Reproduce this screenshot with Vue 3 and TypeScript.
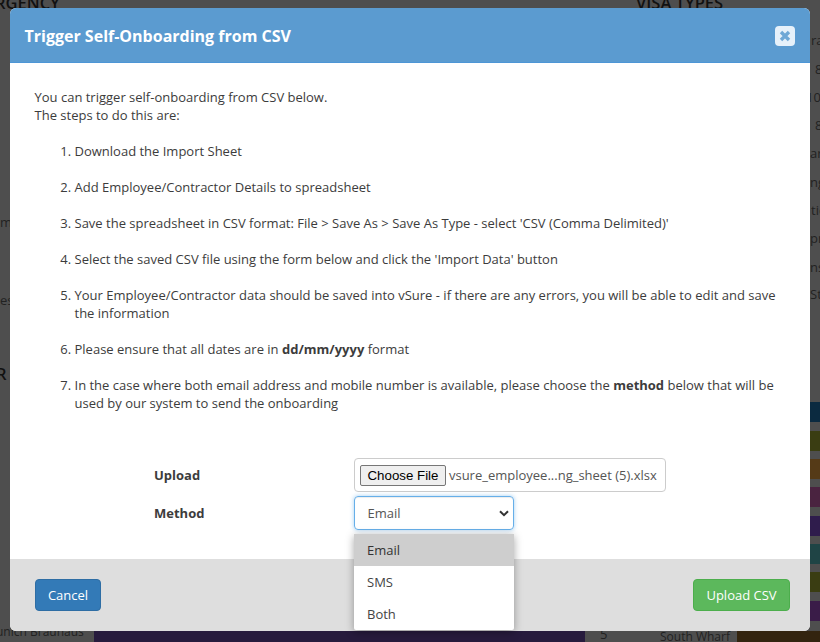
<script setup lang="ts">
const steps = [
  'Download the Import Sheet',
  'Add Employee/Contractor Details to spreadsheet',
  "Save the spreadsheet in CSV format: File > Save As > Save As Type - select 'CSV (Comma Delimited)'",
  "Select the saved CSV file using the form below and click the 'Import Data' button",
  'Your Employee/Contractor data should be saved into vSure - if there are any errors, you will be able to edit and save the information',
]
const bars = [
  { top: 402, color: '#0b2a40' },
  { top: 431, color: '#3a3d12' },
  { top: 459, color: '#553a17' },
  { top: 487, color: '#4a2340' },
  { top: 516, color: '#2f1c4c' },
  { top: 544, color: '#1f4445' },
  { top: 572, color: '#3a3d12' },
  { top: 601, color: '#3a1c48' },
]
</script>

<template>
  <div class="page">
    <div class="bg">
      <span class="frag head" style="left:-5px;top:-8px">RGENCY</span>
      <span class="frag head" style="left:636px;top:-8px">VISA TYPES</span>
      <span class="frag head" style="left:-4px;top:363px">R</span>
      <span class="frag" style="left:0;top:213px">mp</span>
      <span class="frag" style="left:0;top:291px">es</span>
      <span class="frag small" style="left:-4px;top:623px">unich Brauhaus</span>
      <span class="frag" style="left:811px;top:31px">ral</span>
      <span class="frag" style="left:815px;top:60px">8</span>
      <span class="frag" style="left:806px;top:88px">10</span>
      <span class="frag" style="left:815px;top:116px">8</span>
      <span class="frag" style="left:810px;top:144px">ary</span>
      <span class="frag" style="left:810px;top:173px">ng</span>
      <span class="frag" style="left:811px;top:201px">tic</span>
      <span class="frag" style="left:810px;top:229px">pre</span>
      <span class="frag" style="left:810px;top:258px">ns</span>
      <span class="frag" style="left:810px;top:285px">St</span>
      <span class="frag" style="left:600px;top:625px">5</span>
      <span class="frag small" style="left:660px;top:628px">South Wharf</span>
      <div v-for="b in bars" :key="b.top" class="bar" :style="{ top: b.top + 'px', background: b.color }"></div>
      <div class="bar wide-purple"></div>
      <div class="bar wide-brown"></div>
    </div>

    <div class="modal">
      <header class="modal-header">
        <h4>Trigger Self-Onboarding from CSV</h4>
        <button class="close" aria-label="Close">
          <svg width="12" height="12" viewBox="0 0 12 12"><path d="M2 2 L10 10 M10 2 L2 10" stroke="#6fa8d6" stroke-width="3.4" fill="none" /></svg>
        </button>
      </header>
      <section class="modal-body">
        <p class="intro">You can trigger self-onboarding from CSV below.<br />The steps to do this are:</p>
        <ol class="steps">
          <li v-for="s in steps" :key="s">{{ s }}</li>
          <li>Please ensure that all dates are in <b>dd/mm/yyyy</b> format</li>
          <li>In the case where both email address and mobile number is available, please choose the <b>method</b> below that will be used by our system to send the onboarding</li>
        </ol>
        <div class="form">
          <label>Upload</label>
          <div class="file">
            <span class="file-btn">Choose File</span>
            <span class="file-name">vsure_employee...ng_sheet (5).xlsx</span>
          </div>
          <label>Method</label>
          <div class="select">
            <span>Email</span>
            <svg width="10" height="7" viewBox="0 0 10 7"><path d="M1 1.2 L5 5.2 L9 1.2" stroke="#333" stroke-width="2" fill="none" /></svg>
          </div>
        </div>
      </section>
      <footer class="modal-footer">
        <button class="btn cancel">Cancel</button>
        <button class="btn upload">Upload CSV</button>
      </footer>
      <ul class="menu">
        <li class="on">Email</li>
        <li>SMS</li>
        <li>Both</li>
      </ul>
    </div>
  </div>
</template>

<style>
html, body { margin: 0; background: #4d4d4d; overflow: hidden; }
</style>

<style scoped>
.page {
  position: relative;
  width: 820px;
  height: 642px;
  overflow: hidden;
  background: #4e4e4e;
  font-family: "Open Sans", sans-serif;
  font-size: 13px;
  color: #3c3c3c;
}
.bg { position: absolute; inset: 0; }
.frag { position: absolute; color: #222; white-space: nowrap; font-size: 13px; line-height: 18px; }
.small { font-size: 12px; }
.head { font-size: 16.5px; font-weight: 600; color: #111; line-height: 22px; }
.bar { position: absolute; left: 810px; width: 10px; height: 20px; }
.wide-purple { left: 94px; width: 491px; top: 631px; height: 11px; background: #271b3d; }
.wide-brown { left: 737px; width: 83px; top: 631px; height: 11px; background: #33240f; }

.modal {
  position: absolute;
  left: 10px;
  top: 8px;
  width: 800px;
  height: 623px;
  display: flex;
  flex-direction: column;
  background: #fff;
  border-radius: 6px;
}
.modal-header {
  height: 55px;
  box-sizing: border-box;
  flex: none;
  display: flex;
  align-items: center;
  justify-content: space-between;
  padding: 2px 15px 0 14.5px;
  background: #5b9bd0;
  border-bottom: 1px solid #4d96d6;
  border-radius: 6px 6px 0 0;
}
.modal-header h4 {
  margin: 0;
  font-size: 16px;
  font-weight: 700;
  color: #fff;
}
.close {
  width: 20px;
  height: 20px;
  padding: 0;
  display: flex;
  align-items: center;
  justify-content: center;
  border: none;
  border-radius: 4px;
  background: #e6f1fa;
}
.modal-body {
  flex: 1;
  padding: 25px 25px 0 24.5px;
  line-height: 18px;
}
.intro { margin: 0 0 18px; }
.steps {
  margin: 0 0 46px;
  padding: 0 0 0 40px;
}
.steps li { margin-bottom: 18px; }
.steps li:last-child { margin-bottom: 0; }
.form {
  display: grid;
  grid-template-columns: 200px 312px;
  grid-template-rows: 34px 34px;
  row-gap: 4px;
  margin-left: 119.5px;
  align-items: center;
}
.form label { font-weight: 700; }
.file {
  box-sizing: border-box;
  height: 34px;
  display: flex;
  align-items: center;
  padding: 0 5px;
  border: 1px solid #ccc;
  border-radius: 4px;
  white-space: nowrap;
  color: #555;
}
.file-btn {
  box-sizing: border-box;
  height: 21px;
  line-height: 19px;
  padding: 0 6.5px;
  border: 1px solid #767676;
  border-radius: 2px;
  background: #efefef;
  color: #000;
  font-family: "Liberation Sans", sans-serif;
  font-size: 13.3px;
  margin-right: 3px;
}
.select {
  box-sizing: border-box;
  width: 160px;
  height: 34px;
  display: flex;
  align-items: center;
  justify-content: space-between;
  padding: 0 4px 0 12.5px;
  border: 1px solid #66afe9;
  border-radius: 4px;
  color: #555;
  box-shadow: inset 0 1px 1px rgba(0, 0, 0, 0.075), 0 0 4px rgba(102, 175, 233, 0.6);
}
.modal-footer {
  flex: none;
  height: 72px;
  box-sizing: border-box;
  display: flex;
  align-items: center;
  justify-content: space-between;
  padding: 0 20px 0 25px;
  background: #dedede;
  border-radius: 0 0 6px 6px;
}
.btn {
  height: 32px;
  border-radius: 4px;
  font-family: inherit;
  font-size: 13px;
  color: #fff;
  padding: 0;
}
.cancel { width: 66px; background: #337ab7; border: 1px solid #2e6da4; }
.upload { width: 97px; background: #5cb85c; border: 1px solid #4cae4c; }
.menu {
  position: absolute;
  left: 344px;
  top: 526px;
  width: 160px;
  margin: 0;
  padding: 0;
  list-style: none;
  background: #fff;
  box-shadow: 0 2px 8px rgba(0, 0, 0, 0.35);
  border-radius: 0 0 2px 2px;
  color: #444;
}
.menu li { height: 32px; line-height: 32px; padding-left: 13px; }
.menu li.on { background: #cecece; color: #333; }
</style>
